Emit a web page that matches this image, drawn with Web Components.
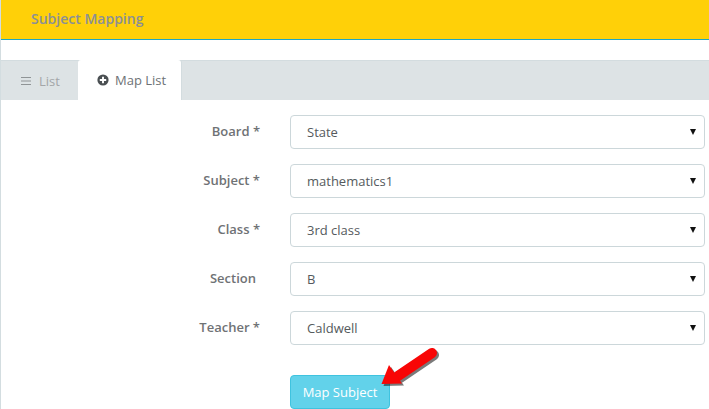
<!DOCTYPE html>
<html>
<head>
<meta charset="utf-8">
<title>Subject Mapping</title>
<style>
html, body { margin: 0; padding: 0; background: #fff; overflow: hidden; }
body { width: 709px; height: 409px; font-family: "Open Sans", sans-serif; }
</style>
</head>
<body>
<map-page>
  <page-header>Subject Mapping</page-header>
  <tab-bar>
    <tab-item icon="bars">List</tab-item>
    <tab-item icon="plus" active>Map List</tab-item>
  </tab-bar>
  <map-form>
    <form-row label="Board *"><fake-select>State</fake-select></form-row>
    <form-row label="Subject *"><fake-select>mathematics1</fake-select></form-row>
    <form-row label="Class *"><fake-select>3rd class</fake-select></form-row>
    <form-row label="Section" nudge><fake-select>B</fake-select></form-row>
    <form-row label="Teacher *"><fake-select>Caldwell</fake-select></form-row>
    <form-row class="submit" style="margin-top:15px"><info-button>Map Subject</info-button></form-row>
  </map-form>
  <red-arrow></red-arrow>
</map-page>

<script>
function makeEl(name, html, init) {
  class El extends HTMLElement {
    constructor() {
      super()
      const template = document.createElement("template")
      template.innerHTML = html
      const shadow = this.attachShadow({ mode: "open" })
      shadow.append(template.content.cloneNode(true))
      if (init) init(this, shadow)
    }
  }
  customElements.define(name, El)
}

makeEl('map-page', `
  <style>
    :host {
      display: block; position: relative; box-sizing: border-box;
      width: 709px; height: 409px; overflow: hidden;
      border-left: 1px solid #d3dde0;
    }
  </style>
  <slot></slot>
`)

makeEl('page-header', `
  <style>
    :host {
      display: block; box-sizing: border-box; height: 40px; margin-left: -1px;
      padding: 9px 0 0 30px;
      background: #ffd008;
      border-left: 1px solid #1fa6c4;
      border-bottom: 1px solid #1fa6c4;
      color: #8b8f96; font-size: 14px; font-weight: 600; line-height: 20px;
    }
  </style>
  <slot></slot>
`)

makeEl('tab-bar', `
  <style>
    :host {
      display: flex; height: 40px; margin-top: 20px; box-sizing: border-box;
      background: #dde3e5;
      border-top: 1px solid #d3dcdf;
    }
  </style>
  <slot></slot>
`)

const icons = {
  bars: `<svg width="10" height="8" viewBox="0 0 10 8"><path d="M0 .5h10M0 4h10M0 7.5h10" stroke="#8f9496" stroke-width="1.2" fill="none"/></svg>`,
  plus: `<svg width="12" height="12" viewBox="0 0 12 12"><circle cx="6" cy="6" r="5.6" fill="#4a4f52"/><path d="M6 2.800v6.400M2.800 6h6.400" stroke="#fff" stroke-width="1.900"/></svg>`
}

makeEl('tab-item', `
  <style>
    :host {
      display: flex; align-items: center; box-sizing: border-box;
      width: 77px; height: 39px; padding-left: 20px; gap: 8px;
      font-size: 13px; color: #a3a6a8;
    }
    :host([active]) {
      width: 103px; height: 40px; padding-left: 19px; gap: 6px; background: #fff; color: #6d7275;
      border-radius: 3px 3px 0 0;
      box-shadow: 1px 0 0 #d3dcdf;
      margin-top: -1px;
    }
    span { display: flex; }
  </style>
  <span id="ic"></span><slot></slot>
`, (el, shadow) => {
  shadow.getElementById('ic').innerHTML = icons[el.getAttribute('icon')]
})

makeEl('map-form', `
  <style>
    :host { display: flex; flex-direction: column; gap: 15px; padding-top: 15px; }
  </style>
  <slot></slot>
`)

makeEl('form-row', `
  <style>
    :host { display: flex; align-items: center; height: 34px; }
    label {
      box-sizing: border-box; width: 259px; text-align: right; flex: none;
      font-size: 13px; font-weight: 600; color: #6f7275;
      margin-top: -2px;
    }
    :host([nudge]) label { width: 255px; margin-right: 4px; }
    .ctl { margin-left: 30px; flex: none; }
  </style>
  <label id="lb"></label><div class="ctl"><slot></slot></div>
`, (el, shadow) => {
  shadow.getElementById('lb').textContent = el.getAttribute('label') || ''
})

makeEl('fake-select', `
  <style>
    :host {
      display: flex; align-items: center; justify-content: space-between; box-sizing: border-box;
      width: 415px; height: 34px; padding: 0 8px 0 16px;
      background: #fff; border: 1px solid #ccd7da; border-radius: 4px;
      font-size: 13px; color: #555a5d;
    }
    i { width: 0; height: 0; border-left: 3px solid transparent; border-right: 3px solid transparent; border-top: 6px solid #111; }
  </style>
  <slot></slot><i></i>
`)

makeEl('info-button', `
  <style>
    :host {
      display: flex; align-items: center; justify-content: center; box-sizing: border-box;
      width: 100px; height: 34px;
      background: #62d2ea; border: 1px solid #3fc3df; border-radius: 4px;
      color: #fff; font-size: 13px; font-weight: 400;
    }
  </style>
  <slot></slot>
`)

makeEl('red-arrow', `
  <style>
    :host { position: absolute; left: 370px; top: 340px; width: 80px; height: 60px; display: block; }
    svg { display: block; overflow: visible; }
  </style>
  <svg width="80" height="60" viewBox="0 0 80 60">
    <defs>
      <g id="shape">
        <path d="M27 36 L61 13" stroke-width="10" stroke-linecap="round" fill="none"/>
        <path d="M10.500 44 L18 25 L31 43.500 Z" stroke-width="0"/>
      </g>
    </defs>
    <use href="#shape" transform="translate(2 2)" fill="#222" stroke="#222" opacity=".6"/>
    <use href="#shape" fill="#f80606" stroke="#f80606"/>
  </svg>
`)
</script>
</body>
</html>
